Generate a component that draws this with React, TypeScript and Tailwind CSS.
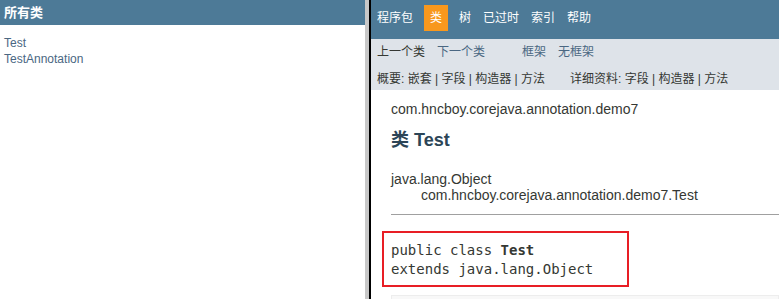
const sans = "font-['Liberation_Sans','Noto_Sans_CJK_SC',sans-serif]"

const navItems = ['程序包', '类', '树', '已过时', '索引', '帮助']

function ClassListFrame() {
  return (
    <div className="w-[365px] shrink-0 bg-white">
      <div className="flex h-[25px] items-center bg-[#4d7a97] pl-[4px] text-[13px] font-bold text-white">
        所有类
      </div>
      <ul className="pl-[4px] pt-[10px] text-[12px] leading-[16px] text-[#4a6782]">
        <li>Test</li>
        <li>TestAnnotation</li>
      </ul>
    </div>
  )
}

function TopNav() {
  return (
    <div className="h-[39px] bg-[#4d7a97]">
      <ul className="flex pt-[5px] text-[12px] leading-[16px] text-white">
        {navItems.map((item) =>
          item === '类' ? (
            <li key={item} className="mx-[5px] bg-[#f8981d] px-[6px] py-[5px]">
              {item}
            </li>
          ) : (
            <li key={item} className="px-[6px] py-[5px]">
              {item}
            </li>
          ),
        )}
      </ul>
    </div>
  )
}

function SubNav() {
  return (
    <div className="h-[51px] bg-[#dee3e9] pl-[6px] pt-[5px] text-[12px] leading-[16px] text-[#353833]">
      <div className="flex">
        <span>上一个类</span>
        <span className="ml-[12px] text-[#4a6782]">下一个类</span>
        <span className="ml-[37px] text-[#4a6782]">框架</span>
        <span className="ml-[12px] text-[#4a6782]">无框架</span>
      </div>
      <div className="mt-[11px] flex whitespace-pre">
        <span className="w-[193px]">概要: 嵌套 | 字段 | 构造器 | 方法</span>
        <span>详细资料: 字段 | 构造器 | 方法</span>
      </div>
    </div>
  )
}

function ClassBody() {
  return (
    <div className="pl-[20px] text-[14px] text-[#353833]">
      <div className="mt-[10px] leading-[18px]">com.hncboy.corejava.annotation.demo7</div>
      <h2 className="mt-[11px] text-[18px] font-bold leading-[22px] text-[#2c4557]">类 Test</h2>
      <div className="mt-[20px] leading-[16px]">java.lang.Object</div>
      <div className="pl-[30px] leading-[16px]">com.hncboy.corejava.annotation.demo7.Test</div>
      <div className="mt-[11px] border-t border-[#a0a0a0]" />
      <div className="ml-[-9px] mt-[16px] h-[56px] w-[247px] border-2 border-[#e81e25] pl-[7px] pt-[8px] font-['DejaVu_Sans_Mono',monospace] text-[14px] leading-[19px]">
        <div>
          public class <b>Test</b>
        </div>
        <div>extends java.lang.Object</div>
      </div>
      <div className="mt-[8px] h-[20px] border border-[#ededed] bg-[#f8f8f8]" />
    </div>
  )
}

export default function App() {
  return (
    <div className={`flex h-[299px] w-[779px] overflow-hidden bg-white ${sans}`}>
      <ClassListFrame />
      <div className="w-[4px] shrink-0 bg-[#c8c8c8]" />
      <div className="w-[2px] shrink-0 bg-black" />
      <div className="min-w-0 flex-1 bg-white">
        <TopNav />
        <SubNav />
        <ClassBody />
      </div>
    </div>
  )
}
